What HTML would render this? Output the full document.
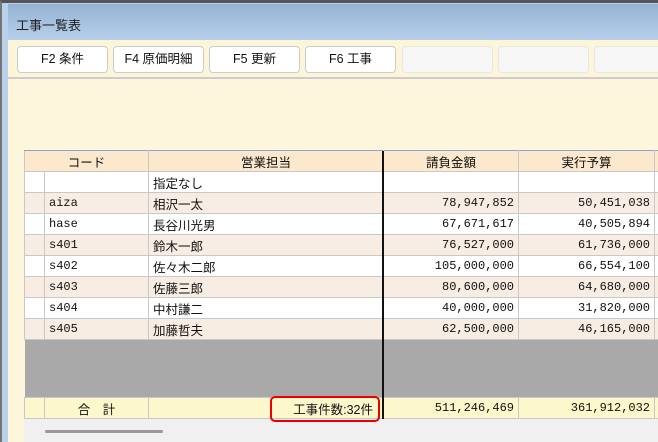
<!DOCTYPE html>
<html><head><meta charset="utf-8"><style>
*{margin:0;padding:0;box-sizing:border-box}
body{width:658px;height:442px;overflow:hidden;background:#fff;font-family:"Liberation Sans","Noto Sans CJK JP",sans-serif;position:relative}
.win{position:absolute;left:0;top:0;width:658px;height:442px;border-top:3px solid #555;border-left:2px solid #777;background:#b9d1ea}
.title{position:absolute;left:6px;top:1px;right:0;height:36px;background:linear-gradient(#95b3d2,#b6d0ea);font-size:13px;color:#222;padding:11px 0 0 8px}
.tool{position:absolute;left:6px;top:37px;right:0;height:39px;background:#fdf5d9;border-bottom:2px solid #ccc}
.btn{position:absolute;top:6px;height:27px;width:91px;border:1px solid #ccc;border-radius:4px;background:#fff;font-size:12.5px;text-align:center;line-height:25px;color:#111}
.btn.e{background:#f7f7f7;border-color:#e8e8e0}
.main{position:absolute;left:6px;top:74px;right:0;bottom:0;background:#fef6dc}
table{position:absolute;left:24px;top:150px;width:634px;border-collapse:collapse;font-size:12.5px;table-layout:fixed}
td{height:21px;border:1px solid #c8c8c8;padding:0 4px;white-space:nowrap;overflow:hidden;color:#111}
.h td{background:#fce8cc;text-align:center;border-top:1px solid #8aa5c8}
.w td{background:#fff}.b td{background:#f8ede2}
.n{text-align:right;font-family:"Liberation Mono","Noto Sans CJK JP",monospace;font-size:12px}
.c{font-family:"Liberation Mono",monospace;font-size:12px}
.t td{background:#fdf7cc}
.foot{position:absolute;left:24px;top:419px;width:634px;height:23px;background:#f0f0f0}
.sb{position:absolute;left:45px;top:430px;width:118px;height:3px;background:#999;border-radius:2px}
.red{position:absolute;left:270px;top:396px;width:110px;height:26px;border:2.5px solid #e00;border-radius:5px}
</style></head><body>
<div class="win">
<div class="title">工事一覧表</div>
<div class="main"></div>
<div class="tool">
<div class="btn" style="left:9px">F2 条件</div>
<div class="btn" style="left:105px">F4 原価明細</div>
<div class="btn" style="left:201px">F5 更新</div>
<div class="btn" style="left:297px">F6 工事</div>
<div class="btn e" style="left:394px"></div>
<div class="btn e" style="left:490px"></div>
<div class="btn e" style="left:586px"></div>
</div>
</div>
<table>
<colgroup><col style="width:20px"><col style="width:104px"><col style="width:235px"><col style="width:135px"><col style="width:136px"><col style="width:4px"></colgroup>
<tr class="h"><td colspan="2">コード</td><td>営業担当</td><td>請負金額</td><td>実行予算</td><td></td></tr>
<tr class="w"><td></td><td></td><td>指定なし</td><td></td><td></td><td></td></tr>
<tr class="b"><td></td><td class="c">aiza</td><td>相沢一太</td><td class="n">78,947,852</td><td class="n">50,451,038</td><td></td></tr>
<tr class="w"><td></td><td class="c">hase</td><td>長谷川光男</td><td class="n">67,671,617</td><td class="n">40,505,894</td><td></td></tr>
<tr class="b"><td></td><td class="c">s401</td><td>鈴木一郎</td><td class="n">76,527,000</td><td class="n">61,736,000</td><td></td></tr>
<tr class="w"><td></td><td class="c">s402</td><td>佐々木二郎</td><td class="n">105,000,000</td><td class="n">66,554,100</td><td></td></tr>
<tr class="b"><td></td><td class="c">s403</td><td>佐藤三郎</td><td class="n">80,600,000</td><td class="n">64,680,000</td><td></td></tr>
<tr class="w"><td></td><td class="c">s404</td><td>中村謙二</td><td class="n">40,000,000</td><td class="n">31,820,000</td><td></td></tr>
<tr class="b"><td></td><td class="c">s405</td><td>加藤哲夫</td><td class="n">62,500,000</td><td class="n">46,165,000</td><td></td></tr>
<tr><td colspan="6" style="height:58px;background:#a9a9a9;border:none"></td></tr>
<tr class="t"><td></td><td style="text-align:center">合　計</td><td style="text-align:right;padding-right:10px">工事件数:32件</td><td class="n">511,246,469</td><td class="n">361,912,032</td><td></td></tr>
</table>
<div style="position:absolute;left:382px;top:151px;width:2px;height:268px;background:#111"></div>
<div class="foot"></div>
<div class="sb"></div>
<div class="red"></div>
</body></html>
